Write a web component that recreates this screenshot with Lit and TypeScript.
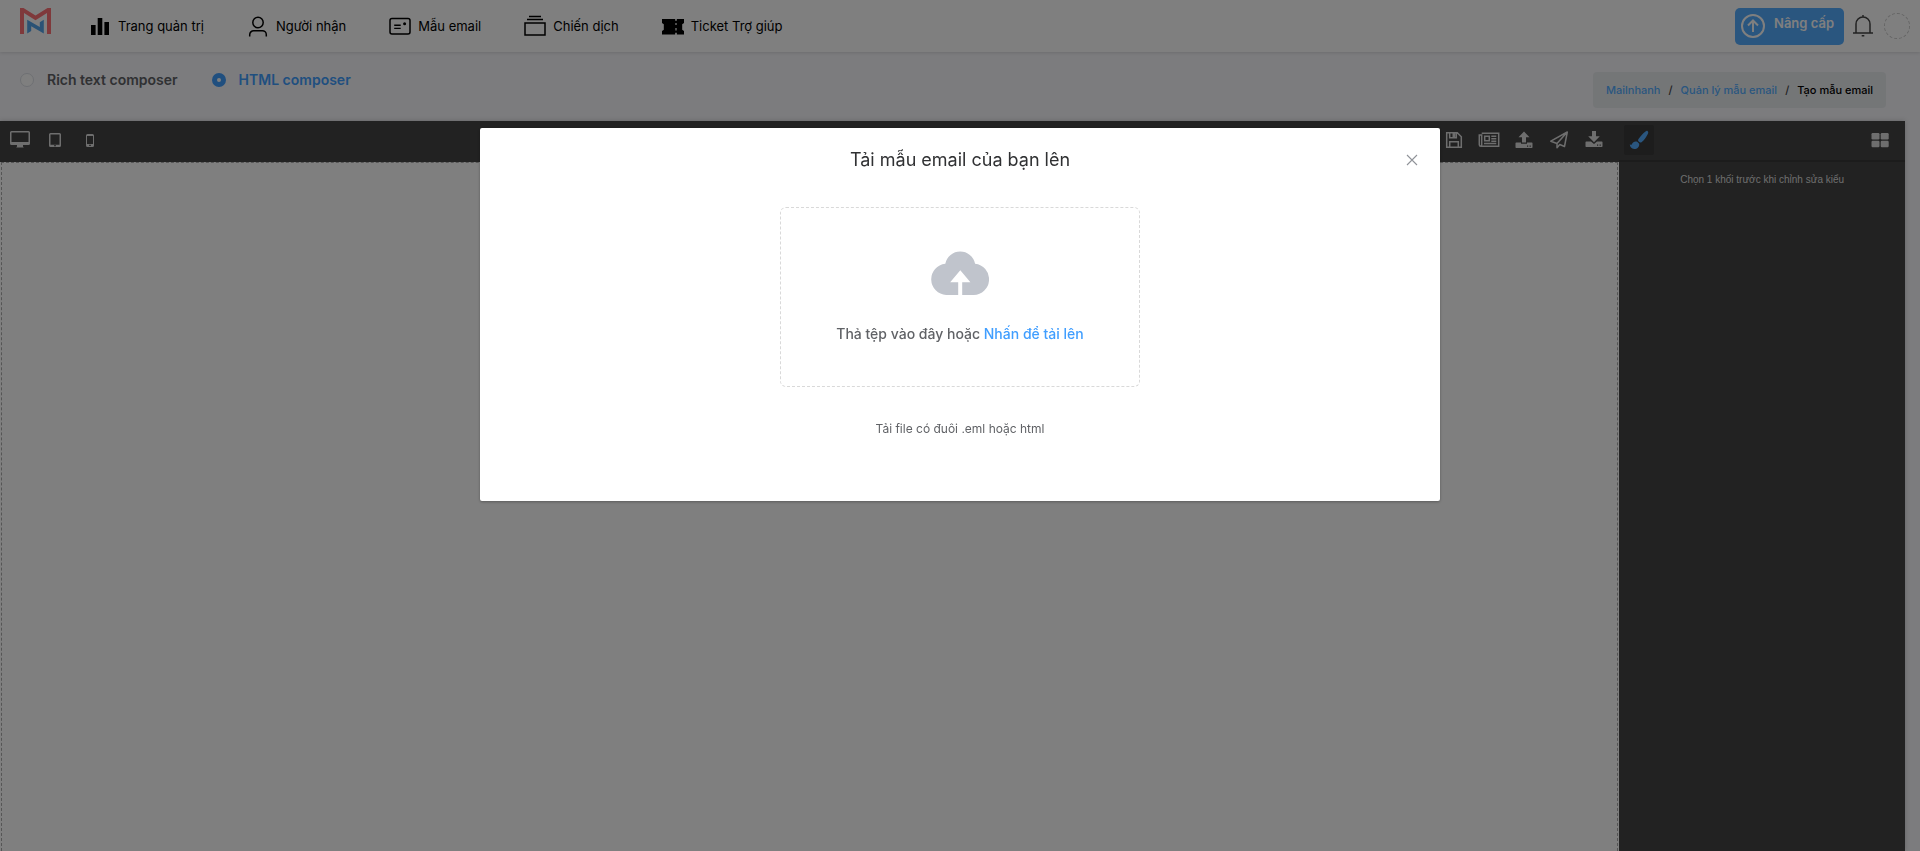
import { LitElement, html, css, svg } from 'lit';
import { customElement, state } from 'lit/decorators.js';

const icons = {
  chart: svg`<path d="M2 10h4.600v10H2zM8.700 3h4.600v17H8.700zM15.400 7H20v13h-4.600z" fill="currentColor"/>`,
  user: svg`<g fill="none" stroke="currentColor" stroke-width="1.500"><circle cx="11" cy="7.500" r="5.200"/><path d="M2.700 21.500v-1.800a4 4 0 0 1 4-4h8.600a4 4 0 0 1 4 4v1.800"/></g>`,
  mail: svg`<rect x="1" y="3.500" width="20" height="15.500" rx="2" fill="none" stroke="currentColor" stroke-width="1.500"/><path d="M5.200 10.200h6.500M5.200 13.400h6.500" stroke="currentColor" stroke-width="1.400"/><circle cx="15.600" cy="8.700" r="1.500" fill="currentColor"/>`,
  folders: svg`<path d="M5 1.500h12M3 4.500h16M1 8h20v12H1z" fill="none" stroke="currentColor" stroke-width="1.500"/>`,
  ticket: svg`<path d="M0 4h13.200v1.800h1.600V4H22v4l-1.800 1.300v5.400L22 16v3.500h-7.200v-1.800h-1.600v1.800H0V16l1.800-1.300V9.300L0 8z" fill="currentColor"/><path d="M14 8v2m0 3v2.500" stroke="#fff" stroke-width="1.200"/>`,
};

@customElement('app-root')
export class AppRoot extends LitElement {
  @state() private composer = 'html';

  static styles = css`
    :host {
      display: flex;
      flex-direction: column;
      min-height: 100vh;
      background: #f8f8fc;
      font-family: Inter, 'Liberation Sans', sans-serif;
      font-size: 13px;
      color: #000;
    }
    * { box-sizing: border-box; }
    button { font: inherit; border: 0; background: none; padding: 0; color: inherit; cursor: pointer; }
    a { text-decoration: none; color: inherit; }
    svg { display: block; flex: none; }
    .header {
      display: flex;
      align-items: center;
      height: 52px;
      padding: 0 10px 0 20px;
      background: #fff;
      box-shadow: 0 1px 3px rgba(0, 0, 0, 0.12);
    }
    .logo { align-self: flex-start; padding-top: 8px; margin-right: 38px; }
    .nav { display: flex; gap: 43px; flex: 1; }
    .nav a { display: flex; align-items: center; gap: 7px; line-height: 20px; }
    .account { display: flex; align-items: center; gap: 8px; }
    .upgrade {
      display: flex;
      gap: 9px;
      height: 37px;
      padding: 6px 10px 7px 6px;
      border-radius: 5px;
      background: #54acff;
      color: #fff;
      font-weight: 600;
      line-height: 18px;
    }
    .avatar { width: 26px; height: 26px; border: 1px dashed #c8c8c8; border-radius: 50%; margin-left: 2px; }
    .subbar { display: flex; justify-content: space-between; align-items: flex-start; height: 69px; padding: 18px 34px 0 20px; }
    .choices { display: flex; gap: 34px; }
    .choice { display: flex; align-items: center; gap: 13px; line-height: 20px; font-size: 14px; font-weight: 600; color: #606266; }
    .choice.on { color: #409eff; }
    .choice input { appearance: none; width: 14px; height: 14px; margin: 0; border: 1px solid #dcdfe6; border-radius: 50%; background: #fff; }
    .choice input:checked { border: 5px solid #409eff; }
    .crumbs {
      display: flex;
      gap: 8px;
      margin-top: 2px;
      padding: 9px 13px;
      border-radius: 4px;
      background: #e9ecef;
      font-size: 11px;
      font-weight: 500;
      line-height: 18px;
    }
    .crumbs a { color: #54acff; }
    .slash { color: #444; }
    .editor { display: flex; flex: 1; margin-right: 15px; background: #444; color: #ddd; box-shadow: 0 0 5px rgba(0, 0, 0, 0.2); }
    .work { flex: 1; display: flex; flex-direction: column; }
    .tools { display: flex; justify-content: space-between; height: 41px; padding: 0 8px 3px 2px; }
    .group { display: flex; align-items: center; }
    .tool { width: 35px; height: 35px; display: grid; place-items: center; }
    .canvas { flex: 1; background: #fff; padding: 0 1px; display: flex; }
    .wrapper { flex: 1; border: 1px dashed #aaa; border-bottom: 0; }
    .panel { width: 15%; font-family: 'Liberation Sans', Arial, sans-serif; }
    .tabs { display: flex; justify-content: space-between; align-items: center; height: 41px; padding: 0 15px 2px 5px; border-bottom: 2px solid #383838; }
    .brush { display: grid; place-items: center; width: 30px; height: 30px; border-radius: 2px; background: #3a3a3a; color: #54acff; }
    .hint { margin: 0; padding: 12px 10px; text-align: center; font-size: 10px; line-height: 12px; }
    .overlay { position: fixed; inset: 0; z-index: 10; background: rgba(0, 0, 0, 0.5); }
    .dialog { width: 50%; margin: 15vh auto 0; background: #fff; border-radius: 2px; box-shadow: 0 1px 3px rgba(0, 0, 0, 0.3); }
    .dialog-head { display: grid; grid-template-columns: 16px 1fr 16px; align-items: center; padding: 20px 20px 10px; }
    .dialog-head h2 { grid-column: 2; margin: 0; text-align: center; font-size: 18px; font-weight: 400; line-height: 24px; color: #303133; }
    .close { color: #909399; }
    .dialog-body { display: flex; flex-direction: column; align-items: center; padding: 25px 20px 63px; color: #606266; }
    .drop {
      display: flex;
      flex-direction: column;
      align-items: center;
      width: 360px;
      height: 180px;
      padding: 43px 10px 0;
      border: 1px dashed #d9d9d9;
      border-radius: 6px;
      font-size: 14px;
      line-height: 20px;
      cursor: pointer;
    }
    .drop { font-weight: 500; }
    .drop svg { margin-bottom: 29px; }
    .drop em { font-style: normal; color: #409eff; }
    .drop input { display: none; }
    .note { margin: 33px 0 0; font-size: 12px; line-height: 18px; }
  `;

  private nav(icon: unknown, label: string) {
    return html`<a href="#"><svg width="22" height="22" viewBox="0 0 22 22">${icon}</svg>${label}</a>`;
  }

  private tool(label: string, body: unknown) {
    return html`<button class="tool" aria-label=${label}><svg width="22" height="20" viewBox="0 0 22 20">${body}</svg></button>`;
  }

  private choice(value: string, label: string) {
    return html`<label class="choice ${this.composer === value ? 'on' : ''}">
      <input type="radio" name="composer" .checked=${this.composer === value} @change=${() => (this.composer = value)} />${label}</label>`;
  }

  render() {
    return html`
      <header class="header">
        <a class="logo" href="#" aria-label="Mailnhanh">
          <svg width="31" height="26" viewBox="0 0 31 26">
            <path d="M0 26V0h3.500l12 7.600L27.500 0H31v26h-4V5L15.500 12.300 4 5v21z" fill="#ff7377"/>
            <path d="M7.200 25.500V11.700l12.600 7.300v-4.800l4-2.400v13.700l-12.600-7.300v4.700z" fill="#54a5ea"/>
          </svg>
        </a>
        <nav class="nav">
          ${this.nav(icons.chart, 'Trang quản trị')}
          ${this.nav(icons.user, 'Người nhận')}
          ${this.nav(icons.mail, 'Mẫu email')}
          ${this.nav(icons.folders, 'Chiến dịch')}
          ${this.nav(icons.ticket, 'Ticket Trợ giúp')}
        </nav>
        <div class="account">
          <button class="upgrade">
            <svg width="24" height="24" viewBox="0 0 24 24" fill="none" stroke="currentColor" stroke-width="2"><circle cx="12" cy="12" r="11"/><path d="M12 18V7M7 11.500l5-5 5 5"/></svg>
            Nâng cấp
          </button>
          <button aria-label="Thông báo">
            <svg width="22" height="22" viewBox="0 0 22 22" fill="none" stroke="#444" stroke-width="1.500"><path d="M1 18h20M4 18V9a7 7 0 0 1 14 0v9M11 0v2M9.700 20.700h2.600"/></svg>
          </button>
          <button class="avatar" aria-label="Tài khoản"></button>
        </div>
      </header>

      <section class="subbar">
        <div class="choices">
          ${this.choice('rich', 'Rich text composer')}
          ${this.choice('html', 'HTML composer')}
        </div>
        <nav class="crumbs">
          <a href="#">Mailnhanh</a><span class="slash">/</span>
          <a href="#">Quản lý mẫu email</a><span class="slash">/</span>
          <span>Tạo mẫu email</span>
        </nav>
      </section>

      <main class="editor">
        <div class="work">
          <div class="tools">
            <div class="group">
              ${this.tool('Desktop', svg`<path fill="currentColor" fill-rule="evenodd" d="M2.500 1h17A1.500 1.500 0 0 1 21 2.500v11a1.500 1.500 0 0 1-1.500 1.500H14v1.500l.8 1H7.200l.8-1V15H2.500A1.500 1.500 0 0 1 1 13.500v-11A1.500 1.500 0 0 1 2.500 1zm0 1.500V12h17V2.500z"/>`)}
              ${this.tool('Tablet', svg`<path fill="currentColor" fill-rule="evenodd" d="M6.500 3h9A1.500 1.500 0 0 1 17 4.500v11a1.500 1.500 0 0 1-1.500 1.500h-9A1.500 1.500 0 0 1 5 15.500v-11A1.500 1.500 0 0 1 6.500 3zm0 1.500V14.700h9V4.500zM10 15.200v1h2v-1z"/>`)}
              ${this.tool('Mobile', svg`<path fill="currentColor" fill-rule="evenodd" d="M8.500 4h5A1.500 1.500 0 0 1 15 5.500v10a1.500 1.500 0 0 1-1.500 1.500h-5A1.500 1.500 0 0 1 7 15.500v-10A1.500 1.500 0 0 1 8.500 4zM8 6v8h6V6zm2.200 8.700v1.200h1.600v-1.200z"/>`)}
            </div>
            <div class="group">
              ${this.tool('Lưu', svg`<path fill="none" stroke="currentColor" stroke-width="1.500" d="M3.700 2.700h10.600l4 4v10.600H3.700zM6.700 17v-5.200h8.600V17M6.700 3v4.700h6.600V3"/><path fill="currentColor" d="M9.500 3h3v4h-3z"/>`)}
              ${this.tool('Mẫu', svg`<path fill="none" stroke="currentColor" stroke-width="1.500" d="M3.700 3.200h17v13H2.800a1.500 1.500 0 0 1-1.500-1.500V5h2.400v9.700a1.500 1.500 0 0 1-1 1.500M6.700 6.200h4.600v4.600H6.700zM13.300 6.200h5M13.300 8.700h5M13.300 11.200h5M6 13.500h12.300"/>`)}
              ${this.tool('Tải lên', svg`<path fill="currentColor" fill-rule="evenodd" d="M11 1.500l5.500 5.700H13v5.300H9V7.200H5.500zM3.200 12.500H8v1.200h6v-1.200h4.800a.8.800 0 0 1 .7.800v3.900a.8.800 0 0 1-.7.800H3.200a.8.800 0 0 1-.7-.8v-3.900a.8.800 0 0 1 .7-.8zm10.800 3v1.200h1.200v-1.200zm2.600 0v1.200h1.200v-1.200z"/>`)}
              ${this.tool('Gửi', svg`<path fill="none" stroke="currentColor" stroke-width="1.500" stroke-linejoin="round" d="M19.300 2L16.500 16.500 11.800 14.500 9 17.800V13.500L19.300 2 2.800 11.200 9 13.500"/>`)}
              ${this.tool('Tải xuống', svg`<path fill="currentColor" fill-rule="evenodd" d="M9 1h4v5.300h3.800L11 12.200 5.200 6.300H9zM3.200 11.500H8l3 2.500 3-2.500h4.800a.8.800 0 0 1 .7.800v3.900a.8.800 0 0 1-.7.800H3.200a.8.800 0 0 1-.7-.8v-3.900a.8.800 0 0 1 .7-.8zm10.800 3v1.200h1.200v-1.200zm2.600 0v1.200h1.200v-1.200z"/>`)}
            </div>
          </div>
          <div class="canvas"><div class="wrapper"></div></div>
        </div>
        <aside class="panel">
          <div class="tabs">
            <button class="brush" aria-label="Kiểu">
              <svg width="20" height="20" viewBox="0 0 20 20" fill="currentColor"><path d="M18.700 1.200c.8.700.6 1.800.1 2.800-1.500 3-3.700 6.200-6 8-1 .8-2 .7-2.900-.2-.9-.9-1.100-1.900-.4-2.800C11.400 6.400 14 3.400 16.500 1.500c.8-.6 1.500-.9 2.200-.3z"/><path d="M8.300 11.800l1.900 1.900c.5 3-1.900 5.300-5 5.300C2.500 19 1 17 .8 14.300c1.200.8 1.700.7 2.200-.4.900-2 3-3 5.300-2.100z"/></svg>
            </button>
            <button aria-label="Khối">
              <svg width="20" height="16" viewBox="0 0 20 16" fill="currentColor"><rect x="1.500" y="1" width="8" height="6.500" rx="1.200"/><rect x="10.700" y="1" width="8" height="6.500" rx="1.200"/><rect x="1.500" y="8.800" width="8" height="6.500" rx="1.200"/><rect x="10.700" y="8.800" width="8" height="6.500" rx="1.200"/></svg>
            </button>
          </div>
          <p class="hint">Chọn 1 khối trước khi chỉnh sửa kiểu</p>
        </aside>
      </main>

      <div class="overlay">
        <div class="dialog" role="dialog" aria-modal="true" aria-labelledby="dialog-title">
          <div class="dialog-head">
            <h2 id="dialog-title">Tải mẫu email của bạn lên</h2>
            <button class="close" aria-label="Đóng">
              <svg width="16" height="16" viewBox="0 0 16 16" stroke="currentColor" stroke-width="1.100"><path d="M3 3l10 10M13 3L3 13"/></svg>
            </button>
          </div>
          <div class="dialog-body">
            <label class="drop">
              <input type="file" accept=".eml,.html" />
              <svg width="58" height="44" viewBox="0 0 58 44"><path fill="#c0c4cc" d="M14.300 12.700a15.200 15.200 0 0 1 29.800 0A15.700 15.700 0 0 1 42.700 44H31.200V31.300h8.200L29.300 19.200 19.200 31.300h8V44H15.200a15.700 15.700 0 0 1-.9-31.300z"/></svg>
              <span>Thả tệp vào đây hoặc <em>Nhấn để tải lên</em></span>
            </label>
            <p class="note">Tải file có đuôi .eml hoặc html</p>
          </div>
        </div>
      </div>
    `;
  }
}
